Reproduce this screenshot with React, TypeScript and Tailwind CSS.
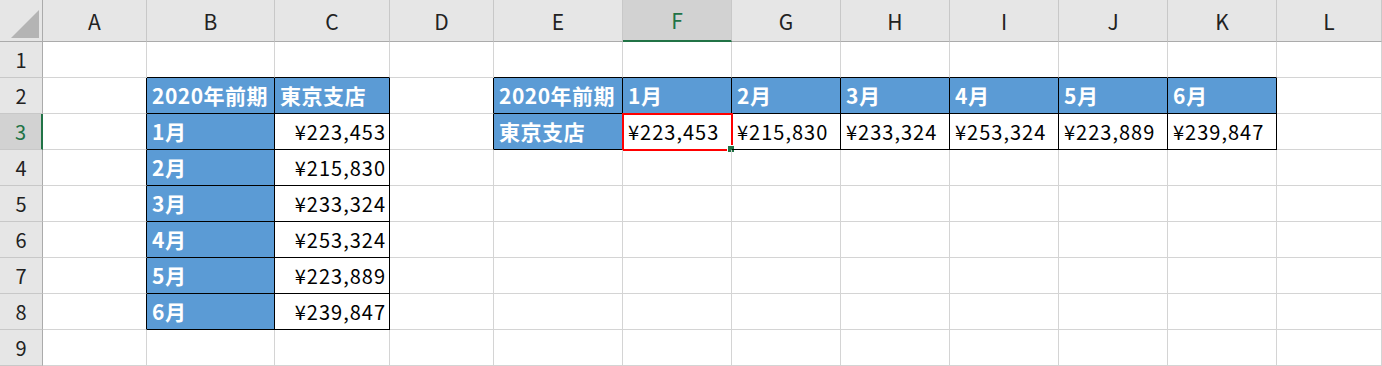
const cols = ["A", "B", "C", "D", "E", "F", "G", "H", "I", "J", "K", "L"];
const rows = [1, 2, 3, 4, 5, 6, 7, 8, 9];

const months = ["1月", "2月", "3月", "4月", "5月", "6月"];
const sales = ["¥223,453", "¥215,830", "¥233,324", "¥253,324", "¥223,889", "¥239,847"];

type Cell = { text: string; head?: boolean; right?: boolean };

// sheet content keyed like "B2"
const cells: Record<string, Cell> = {
    B2: { text: "2020年前期", head: true },
    C2: { text: "東京支店", head: true },
    E2: { text: "2020年前期", head: true },
    E3: { text: "東京支店", head: true },
};
months.forEach((m, i) => {
    cells["B" + (i + 3)] = { text: m, head: true };
    cells["C" + (i + 3)] = { text: sales[i], right: true };
    cells[cols[5 + i] + "2"] = { text: m, head: true };
    cells[cols[5 + i] + "3"] = { text: sales[i] };
});

const inTable = (r: number, c: number) => {
    // c: 0 = A
    if (r >= 2 && r <= 8 && (c === 1 || c === 2)) return true;
    if (r >= 2 && r <= 3 && c >= 4 && c <= 10) return true;
    return false;
};

const App = () => {
    return (
        <div
            className="w-[1382px] h-[366px] overflow-hidden bg-white text-black"
            style={{ fontFamily: '"Noto Sans CJK JP", "Noto Sans", sans-serif' }}
        >
            <div className="grid grid-cols-[43px_104px_128px_115px_104px_129px_109px_109px_109px_109px_109px_109px_105px] grid-rows-[42px_repeat(9,36px)]">
                {/* corner */}
                <div className="relative bg-[#e6e6e6] border-r border-b border-[#ababab]">
                    <div className="absolute left-[11px] top-[10px] w-[28px] h-[28px] bg-[#b4b4b4] [clip-path:polygon(100%_0,100%_100%,0_100%)]" />
                </div>

                {/* column headers */}
                {cols.map((c) => (
                    <div
                        key={c}
                        className={
                            c === "F"
                                ? "flex items-center justify-center bg-[#d2d2d2] border-r border-[#c8c8c8] border-b-2 border-b-[#217346] text-[#217346] text-[21px] pt-[2px]"
                                : "flex items-center justify-center bg-[#e6e6e6] border-r border-[#c8c8c8] border-b border-b-[#ababab] text-[#222] text-[21px] pt-[2px]"
                        }
                    >
                        {c}
                    </div>
                ))}

                {rows.map((r) => (
                    <>
                        <div
                            key={"h" + r}
                            className={
                                r === 3
                                    ? "flex items-center justify-center bg-[#d2d2d2] border-r-2 border-r-[#217346] border-b border-b-[#c8c8c8] text-[#217346] text-[20px]"
                                    : "flex items-center justify-center bg-[#e6e6e6] border-r border-r-[#ababab] border-b border-b-[#c8c8c8] text-[#222] text-[20px]"
                            }
                        >
                            {r}
                        </div>
                        {cols.map((c, ci) => {
                            const cell = cells[c + r];
                            const rightBlack = inTable(r, ci) || inTable(r, ci + 1);
                            const bottomBlack = inTable(r, ci) || inTable(r + 1, ci);
                            const selected = c === "F" && r === 3;
                            return (
                                <div
                                    key={c + r}
                                    className={[
                                        "relative flex items-center whitespace-nowrap border-r border-b pt-[1px]",
                                        rightBlack ? "border-r-black" : "border-r-[#d4d4d4]",
                                        bottomBlack ? "border-b-black" : "border-b-[#d4d4d4]",
                                        cell?.head
                                            ? "bg-[#5b9bd5] text-white font-bold text-[21px] tracking-[0.5px] pl-[5px]"
                                            : "text-[20px] tracking-[1px]",
                                        cell?.right ? "justify-end pr-[3px]" : "pl-[5px]",
                                    ].join(" ")}
                                >
                                    {cell?.text}
                                    {selected && (
                                        <>
                                            <div className="absolute -left-[1px] -top-[1px] w-[111px] h-[38px] border-2 border-[#ff0000]" />
                                            <div className="absolute -right-[4px] -bottom-[4px] w-[8px] h-[8px] bg-[#217346] border border-white" />
                                        </>
                                    )}
                                </div>
                            );
                        })}
                    </>
                ))}
            </div>
        </div>
    );
};

export default App;
